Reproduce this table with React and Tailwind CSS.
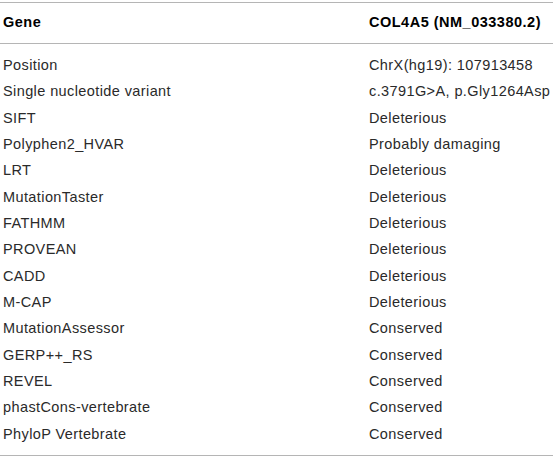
import React from 'react';

const rows = [
    ['Position', 'ChrX(hg19): 107913458'],
    ['Single nucleotide variant', 'c.3791G>A, p.Gly1264Asp'],
    ['SIFT', 'Deleterious'],
    ['Polyphen2_HVAR', 'Probably damaging'],
    ['LRT', 'Deleterious'],
    ['MutationTaster', 'Deleterious'],
    ['FATHMM', 'Deleterious'],
    ['PROVEAN', 'Deleterious'],
    ['CADD', 'Deleterious'],
    ['M-CAP', 'Deleterious'],
    ['MutationAssessor', 'Conserved'],
    ['GERP++_RS', 'Conserved'],
    ['REVEL', 'Conserved'],
    ['phastCons-vertebrate', 'Conserved'],
    ['PhyloP Vertebrate', 'Conserved'],
];

const App = () => {
    return (
        <div className="w-[556px] h-[460px] bg-white pt-[2px] font-['Liberation_Sans',Arial,sans-serif]">
            <div className="w-[553px] border-t-[1.5px] border-b-[1.5px] border-[#b5b5b5]">
                <div className="grid grid-cols-[366px_1fr] h-[41px] items-center pl-[3px] border-b-[1.5px] border-[#b5b5b5] text-[14.5px] tracking-[0.5px] font-bold text-black whitespace-nowrap">
                    <div>Gene</div>
                    <div>COL4A5 (NM_033380.2)</div>
                </div>
                <div className="py-[8px]">
                    {rows.map(([name, value]) => (
                        <div key={name} className="grid grid-cols-[366px_1fr] h-[26.33px] leading-[26.33px] pl-[3px] text-[14.5px] tracking-[0.4px] text-[#2a2a2a] whitespace-nowrap">
                            <div>{name}</div>
                            <div>{value}</div>
                        </div>
                    ))}
                </div>
            </div>
        </div>
    );
};

export default App;
